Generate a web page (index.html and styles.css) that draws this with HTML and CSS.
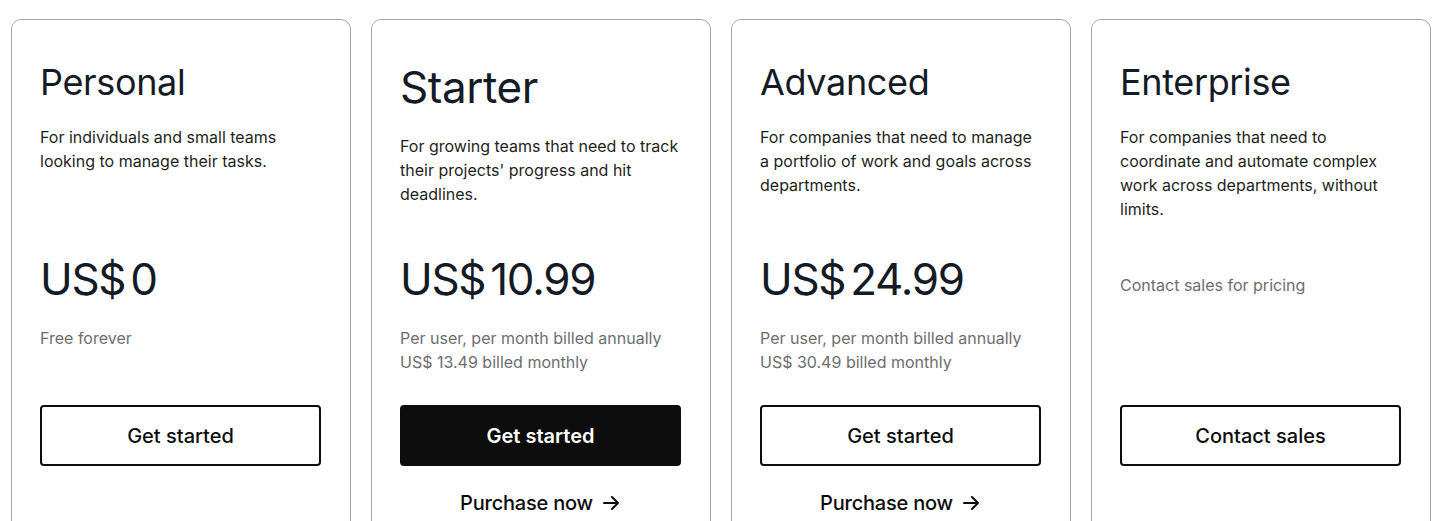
FILE: index.html
```html
<!DOCTYPE html>
<html lang="en">
<head>
<meta charset="utf-8">
<title>Pricing</title>
<link rel="stylesheet" href="styles.css">
</head>
<body>
<main class="plans">
  <section class="card">
    <div class="head">
      <h2 class="title">Personal</h2>
      <p class="desc">For individuals and small teams looking to manage their tasks.</p>
    </div>
    <div class="price">US$<span class="gap"></span>0</div>
    <div class="note">Free forever</div>
    <a class="btn" href="#">Get started</a>
  </section>

  <section class="card card--featured">
    <div class="head">
      <h2 class="title">Starter</h2>
      <p class="desc">For growing teams that need to track their projects' progress and hit deadlines.</p>
    </div>
    <div class="price">US$<span class="gap"></span>10.99</div>
    <div class="note">Per user, per month billed annually<br>US$ 13.49 billed monthly</div>
    <a class="btn btn--dark" href="#">Get started</a>
    <a class="purchase" href="#">Purchase now
      <svg width="20" height="20" viewBox="0 0 20 20" fill="none" stroke="currentColor" stroke-width="2" stroke-linecap="round" stroke-linejoin="round"><path d="M3 10h14M11 4l6 6-6 6"/></svg>
    </a>
  </section>

  <section class="card">
    <div class="head">
      <h2 class="title">Advanced</h2>
      <p class="desc">For companies that need to manage a portfolio of work and goals across departments.</p>
    </div>
    <div class="price">US$<span class="gap"></span>24.99</div>
    <div class="note">Per user, per month billed annually<br>US$ 30.49 billed monthly</div>
    <a class="btn" href="#">Get started</a>
    <a class="purchase" href="#">Purchase now
      <svg width="20" height="20" viewBox="0 0 20 20" fill="none" stroke="currentColor" stroke-width="2" stroke-linecap="round" stroke-linejoin="round"><path d="M3 10h14M11 4l6 6-6 6"/></svg>
    </a>
  </section>

  <section class="card">
    <div class="head">
      <h2 class="title">Enterprise</h2>
      <p class="desc">For companies that need to coordinate and automate complex work across departments, without limits.</p>
    </div>
    <div class="price price--contact">Contact sales for pricing</div>
    <div class="note"></div>
    <a class="btn" href="#">Contact sales</a>
  </section>
</main>
</body>
</html>
```

FILE: styles.css
```css
* { box-sizing: border-box; }

html, body {
  margin: 0;
  padding: 0;
  background: #ffffff;
  font-family: Inter, "Noto Sans", "Liberation Sans", sans-serif;
  color: #1e1f21;
  overflow: hidden;
}

.plans {
  display: grid;
  grid-template-columns: repeat(4, 340px);
  gap: 20px;
  padding: 19px 11px 0 11px;
}

.card {
  display: flex;
  flex-direction: column;
  border: 1px solid #a8a8a8;
  border-radius: 10px;
  padding: 40px 29px 40px 28px;
  min-height: 560px;
}

.head {
  height: 191px;
  display: flex;
  flex-direction: column;
}

.title {
  margin: 0;
  font-size: 36px;
  line-height: 44px;
  font-weight: 400;
  color: #151b26;
  letter-spacing: -0.01em;
}

.desc {
  margin: 21px 0 0 0;
  font-size: 16px;
  line-height: 24px;
  color: #1e1f21;
}

.card--featured .title {
  font-size: 44px;
  line-height: 52px;
  margin-top: 1px;
}

.card--featured .desc {
  margin-top: 21px;
}

.price {
  height: 56px;
  font-size: 44px;
  line-height: 56px;
  color: #151b26;
  letter-spacing: -0.03em;
  white-space: nowrap;
}

.gap {
  display: inline-block;
  width: 5px;
}

.price--contact {
  font-size: 16px;
  line-height: 24px;
  letter-spacing: 0;
  color: #6d6e6f;
  padding-top: 22px;
}

.note {
  margin-top: 19px;
  min-height: 48px;
  font-size: 16px;
  line-height: 24px;
  color: #6d6e6f;
}

.btn {
  margin-top: 31px;
  height: 61px;
  border: 2px solid #0d0d0d;
  border-radius: 4px;
  display: flex;
  align-items: center;
  justify-content: center;
  font-size: 20px;
  font-weight: 500;
  color: #0d0d0d;
  text-decoration: none;
}

.btn--dark {
  background: #0d0d0d;
  color: #ffffff;
  font-weight: 600;
}

.purchase {
  margin-top: 23px;
  display: flex;
  align-items: center;
  justify-content: center;
  gap: 8px;
  font-size: 20px;
  line-height: 28px;
  font-weight: 500;
  color: #0d0d0d;
  text-decoration: none;
  letter-spacing: -0.01em;
}
```
